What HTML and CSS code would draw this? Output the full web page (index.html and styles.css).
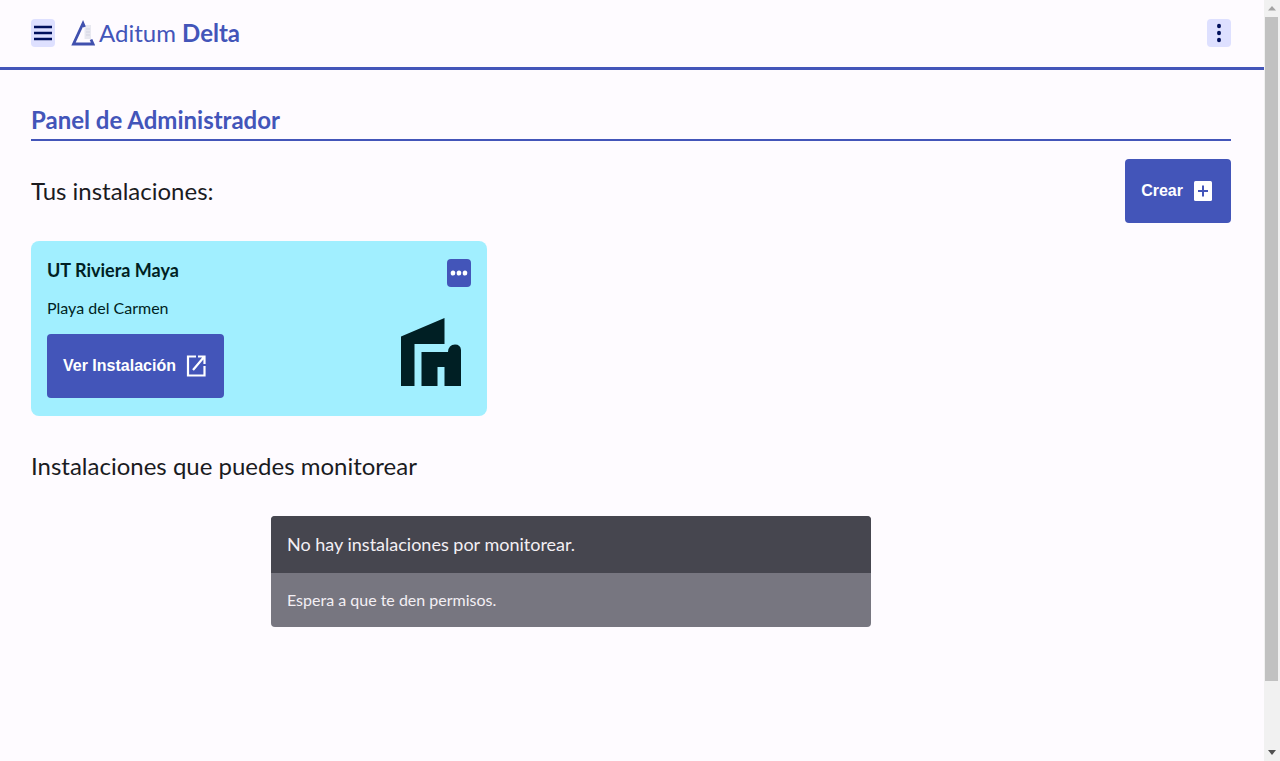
FILE: index.html
```
<!DOCTYPE html>
<html lang="es">
<head>
<meta charset="utf-8">
<meta name="viewport" content="width=device-width, initial-scale=1">
<title>Aditum Delta</title>
<link rel="stylesheet" href="styles.css">
</head>
<body>
<div class="page">
  <header class="topbar">
    <button class="icon-button" type="button" aria-label="Menú">
      <svg width="24" height="28" viewBox="0 0 24 28" fill="none" stroke="#00105c" stroke-width="2.300"><path d="M3 8h18M3 14h18M3 20h18"/></svg>
    </button>
    <a class="brand" href="#">
      <svg class="brand-logo" width="24" height="28" viewBox="0 0 24 28">
        <path d="M13.500 6H20v14h-6.500z" fill="#e8e8f0"/>
        <path d="M15 10h4M15 13h4M15 16h4" stroke="#d3d4e2" stroke-width="1"/>
        <path d="M13.500 8 12 4.500 2.500 25H22l-2-4.500" fill="none" stroke="#4050ae" stroke-width="2.800"/>
      </svg>
      <span>Aditum <strong>Delta</strong></span>
    </a>
    <button class="icon-button topbar-more" type="button" aria-label="Más opciones">
      <svg width="24" height="28" viewBox="0 0 24 28" fill="#00105c"><ellipse cx="12" cy="7" rx="2" ry="2.300"/><ellipse cx="12" cy="14" rx="2" ry="2.300"/><ellipse cx="12" cy="21" rx="2" ry="2.300"/></svg>
    </button>
  </header>
  <main class="content">
    <h1 class="page-title">Panel de Administrador</h1>
    <div class="section-head">
      <h2 class="section-title">Tus instalaciones:</h2>
      <button class="button" type="button">Crear
        <svg width="24" height="28" viewBox="0 0 24 28"><rect x="3" y="4" width="18" height="20" rx="1.500" fill="#fff"/><path d="M7 14h10M12 8.500v11" stroke="#4355b9" stroke-width="2"/></svg>
      </button>
    </div>
    <article class="card">
      <div class="card-info">
        <h3 class="card-title">UT Riviera Maya</h3>
        <p class="card-text">Playa del Carmen</p>
        <button class="button" type="button">Ver Instalación
          <svg width="24" height="28" viewBox="0 0 24 28" fill="none" stroke="#fff" stroke-width="2.200"><path d="M12 4.500H4v19h16.500V14M14 4.500h6.500V12M20 5 9 18"/></svg>
        </button>
      </div>
      <div class="card-side">
        <button class="icon-button icon-button-primary" type="button" aria-label="Opciones de la instalación">
          <svg width="24" height="28" viewBox="0 0 24 28" fill="#fff"><ellipse cx="6" cy="14" rx="2.300" ry="2.600"/><ellipse cx="12" cy="14" rx="2.300" ry="2.600"/><ellipse cx="18" cy="14" rx="2.300" ry="2.600"/></svg>
        </button>
        <svg class="card-picture" width="60" height="68" viewBox="0 0 60 68" fill="#001f24"><path d="M0 18.500 43.500 0v26H13.500v42H0z"/><path d="M20.500 34H47q.5-7.500 7-7.500T60 34v34H43.500V49H36.500v19h-16z"/></svg>
      </div>
    </article>
    <h2 class="section-title">Instalaciones que puedes monitorear</h2>
    <section class="notice">
      <h3 class="notice-title">No hay instalaciones por monitorear.</h3>
      <p class="notice-text">Espera a que te den permisos.</p>
    </section>
  </main>
</div>
<div class="scrollbar" aria-hidden="true">
  <svg width="16" height="17" viewBox="0 0 16 17"><path d="M4 10.500h8L8 6z" fill="#a3a3a3"/></svg>
  <div class="scrollbar-thumb"></div>
  <div class="scrollbar-rest"></div>
  <svg width="16" height="17" viewBox="0 0 16 17"><path d="M4 6h8l-4 5z" fill="#505050"/></svg>
</div>
</body>
</html>
```
FILE: styles.css
```
* {
  box-sizing: border-box;
}

body {
  margin: 0;
  height: 100vh;
  display: flex;
  overflow: hidden;
  background: #fefbff;
  color: #1b1b1f;
  font-family: Lato, "Open Sans", sans-serif;
}

h1, h2, h3, p {
  margin: 0;
}

svg {
  display: block;
  flex: none;
}

.page {
  flex: 1;
  min-width: 0;
  overflow: hidden;
}

.topbar {
  display: flex;
  align-items: center;
  gap: 16px;
  padding: 19px 33px 20px 31px;
  border-bottom: 3px solid #4355b9;
}

.icon-button {
  padding: 0;
  border: 0;
  border-radius: 4px;
  background: #dee0ff;
  cursor: pointer;
}

.icon-button-primary {
  background: #4355b9;
}

.topbar-more {
  margin-left: auto;
}

.brand {
  display: flex;
  align-items: center;
  gap: 4px;
  color: #4355b9;
  font-size: 24px;
  line-height: 28px;
  text-decoration: none;
}

.content {
  padding: 32px 33px 32px 31px;
}

.page-title {
  padding-bottom: 1px;
  border-bottom: 2px solid #4355b9;
  color: #4355b9;
  font-size: 24px;
  font-weight: 700;
  line-height: 36px;
}

.section-head {
  display: flex;
  align-items: center;
  justify-content: space-between;
  margin: 18px 0;
}

.section-title {
  font-size: 24px;
  font-weight: 400;
  line-height: 36px;
}

.button {
  display: flex;
  align-items: center;
  gap: 8px;
  padding: 18px 16px;
  border: 0;
  border-radius: 4px;
  background: #4355b9;
  color: #fff;
  font-family: "Liberation Sans", Arial, sans-serif;
  font-size: 16px;
  font-weight: 700;
  line-height: 28px;
  cursor: pointer;
}

.card {
  display: flex;
  justify-content: space-between;
  width: 38%;
  min-width: 320px;
  margin-bottom: 32px;
  padding: 18px 16px;
  border-radius: 8px;
  background: #a1efff;
  color: #001f24;
}

.card-title {
  font-size: 18px;
  font-weight: 700;
  line-height: 22px;
}

.card-text {
  margin: 12px 0;
  font-size: 16px;
  line-height: 29px;
}

.card-side {
  display: flex;
  flex-direction: column;
  align-items: flex-end;
  justify-content: space-between;
}

.card-picture {
  margin: 0 10px 12px 0;
}

.notice {
  width: 50%;
  margin: 32px 0 0 20%;
  border-radius: 4px;
  overflow: hidden;
  background: #777680;
  color: #f3eff4;
}

.notice-title {
  padding: 16px;
  background: #46464f;
  font-size: 18px;
  font-weight: 400;
  line-height: 25px;
}

.notice-text {
  padding: 16px;
  font-size: 16px;
  line-height: 22px;
}

.scrollbar {
  display: flex;
  flex-direction: column;
  width: 16px;
  background: #f1f1f1;
}

.scrollbar-thumb {
  flex: 664;
  margin: 0 2px 0 1px;
  background: #c1c1c1;
}

.scrollbar-rest {
  flex: 63;
}
```
